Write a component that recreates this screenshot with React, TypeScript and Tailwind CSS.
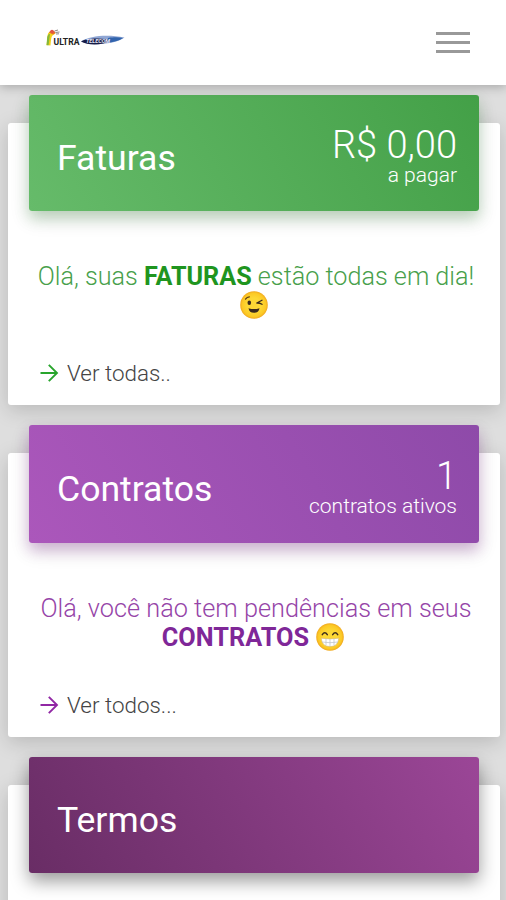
import type { ReactNode } from "react";
import { clsx } from "clsx";

function Logo() {
  return (
    <svg width="80" height="24" viewBox="0 0 80 24" aria-label="Ultra Telecom">
      <path d="M3 6.5C6 3 9 3.5 10.5 6.5L7.5 8.5C6 10 6 14 5.5 18.5L1.5 18C2.5 13 2 10 3 6.5Z" fill="#f2d11d" />
      <path d="M2.2 10C3 7.5 4 7 5 7L3.6 18.3H1.5Z" fill="#86b83a" />
      <path d="M4 5.5C6 3 9 2.8 10.5 6L8 7.5Z" fill="#ea6a2c" />
      <circle cx="7" cy="4.5" r="1.8" fill="#e05545" />
      <path d="M9.5 4l3.5-1M10.5 5.5l4-.5M11 7l3-.2" stroke="#888" strokeWidth="1" />
      <text x="8.5" y="18" fontSize="9.5" fontWeight="700" fill="#222" textLength="26" lengthAdjust="spacingAndGlyphs">
        ULTRA
      </text>
      <path d="M36 14.5C45 8.5 63 7.5 79.5 10.5C73 16 49 20 36 14.5Z" fill="#8fa6d4" />
      <path d="M36 14.5C43 10.5 60 11 66 13.5C57 18.5 43 18.5 36 14.5Z" fill="#171b45" />
      <path d="M63 11C70 10 74 10.3 78 11C74 13.8 68 15.5 62 15.8Z" fill="#3164ad" />
      <text x="41" y="16" fontSize="6" fontWeight="700" fontStyle="italic" fill="#e4e8f8" textLength="24" lengthAdjust="spacingAndGlyphs">
        TELECOM
      </text>
    </svg>
  );
}

function FaceBase() {
  return (
    <>
      <defs>
        <radialGradient id="face">
          <stop offset="0.5" stopColor="#fdd835" />
          <stop offset="0.85" stopColor="#fcc925" />
          <stop offset="1" stopColor="#f0a81e" />
        </radialGradient>
      </defs>
      <circle cx="14" cy="14" r="13.8" fill="url(#face)" />
    </>
  );
}

function Wink() {
  return (
    <svg width="28" height="28" viewBox="0 0 28 28" className="mr-[5px] inline-block align-top" role="img" aria-label="😉">
      <FaceBase />
      <ellipse cx="9.3" cy="11.8" rx="1.8" ry="2.2" fill="#3b2a1c" />
      <path d="M5.5 8.2Q7 5.9 9.4 5.8" stroke="#5a3d18" strokeWidth="1.2" fill="none" strokeLinecap="round" />
      <path d="M22 9.2L16.8 12Q19.5 11.8 22 13.3" stroke="#3b2a1c" strokeWidth="1.3" fill="none" strokeLinecap="round" strokeLinejoin="round" />
      <path d="M8.5 17.2Q14 19 19.5 17.2Q18.8 21.7 14 21.7Q9.2 21.7 8.5 17.2Z" fill="#3b2a1c" />
    </svg>
  );
}

function Grin() {
  return (
    <svg width="28" height="28" viewBox="0 0 28 28" className="mr-[6px] ml-[1px] inline-block align-top" role="img" aria-label="😁">
      <FaceBase />
      <path d="M6.3 11.6Q8.8 8 11.3 11.6M16.7 11.6Q19.2 8 21.7 11.6" stroke="#3b2a1c" strokeWidth="1.5" fill="none" strokeLinecap="round" />
      <path d="M5.2 15.2Q14 16.6 22.8 15.2Q22 23.6 14 23.6Q6 23.6 5.2 15.2Z" fill="#fff" stroke="#d9b977" strokeWidth="0.6" />
      <path d="M6 19Q14 20.4 22 19M10 16v6.5M14 16v7.4M18 16v6.5" stroke="#b9bfc4" strokeWidth="0.7" fill="none" />
    </svg>
  );
}

function Arrow({ className }: { className: string }) {
  return (
    <svg width="19" height="20" viewBox="0 0 19 20" className={className} fill="none" stroke="currentColor" strokeWidth="1.9">
      <path d="M0.5 10H17M8.8 1.8L17 10L8.8 18.2" />
    </svg>
  );
}

interface PanelProps {
  title: string;
  value?: string;
  caption?: string;
  header: string;
  className: string;
  children?: ReactNode;
}

function Panel({ title, value, caption, header, className, children }: PanelProps) {
  return (
    <section className={clsx("rounded-[3px] bg-white px-[21px] shadow-[0_5px_20px_rgba(0,0,0,0.17)]", className)}>
      <div className={clsx("-mt-7 flex items-center justify-between rounded-[3px] pr-[22px] pl-[28px] text-white", header)}>
        <h2 className="pt-[9px] text-[35.6px] leading-[44px]">{title}</h2>
        {value && (
          <div className="pt-[5px] text-right font-light">
            <p className="text-[38px] leading-[38px]">{value}</p>
            <p className="text-[21px] leading-[22px]">{caption}</p>
          </div>
        )}
      </div>
      {children}
    </section>
  );
}

export default function App() {
  return (
    <div className="h-[900px] overflow-hidden bg-[#dedede] font-['Roboto',sans-serif]">
      <header className="relative flex h-[85px] items-center justify-between bg-white pr-[36px] pl-[45px] shadow-[0_2px_10px_rgba(0,0,0,0.25)]">
        <div className="pb-[8px]">
          <Logo />
        </div>
        <button className="flex w-[34px] flex-col gap-[6px]" aria-label="Menu">
          <span className="h-[3px] bg-[#999]" />
          <span className="h-[3px] bg-[#999]" />
          <span className="h-[3px] bg-[#999]" />
        </button>
      </header>

      <main className="flex flex-col pt-[38px] pr-[6px] pl-[8px]">
        <Panel
          title="Faturas"
          value="R$ 0,00"
          caption="a pagar"
          className="h-[282px]"
          header="h-[116px] bg-linear-60 from-[#66bb6a] to-[#43a047] shadow-[0_8px_20px_rgba(0,0,0,0.14),0_7px_14px_rgba(76,175,80,0.25)]"
        >
          <p className="-mr-3 -ml-2 mt-[51px] text-center text-[25.2px] leading-[29px] font-light text-[#48a04b]">
            Olá, suas <b className="font-bold text-[#1f951f]">FATURAS</b> estão todas em dia!
            <br />
            <Wink />
          </p>
          <a className="mt-[38px] ml-[11px] flex items-center gap-[8px] text-[22.4px] leading-[30px] font-light text-[#444]">
            <Arrow className="text-[#28a52c]" />
            Ver todas..
          </a>
        </Panel>

        <Panel
          title="Contratos"
          value="1"
          caption="contratos ativos"
          className="mt-[48px] h-[284px]"
          header="h-[118px] bg-linear-60 from-[#ab57bb] to-[#8e4aa9] shadow-[0_8px_20px_rgba(0,0,0,0.14),0_7px_14px_rgba(156,39,176,0.25)]"
        >
          <p className="-mr-3 -ml-2 mt-[51px] text-center text-[25.3px] leading-[29px] font-light text-[#9645a8]">
            Olá, você não tem pendências em seus
            <br />
            <b className="font-bold text-[#7f2798]">CONTRATOS</b> <Grin />
          </p>
          <a className="mt-[38px] ml-[11px] flex items-center gap-[8px] text-[22.4px] leading-[30px] font-light text-[#444]">
            <Arrow className="text-[#9127a4]" />
            Ver todos...
          </a>
        </Panel>

        <Panel
          title="Termos"
          className="mt-[48px] h-[284px]"
          header="h-[116px] bg-linear-60 from-[#692d65] to-[#9b4697] shadow-[0_8px_18px_rgba(0,0,0,0.4)]"
        />
      </main>
    </div>
  );
}
